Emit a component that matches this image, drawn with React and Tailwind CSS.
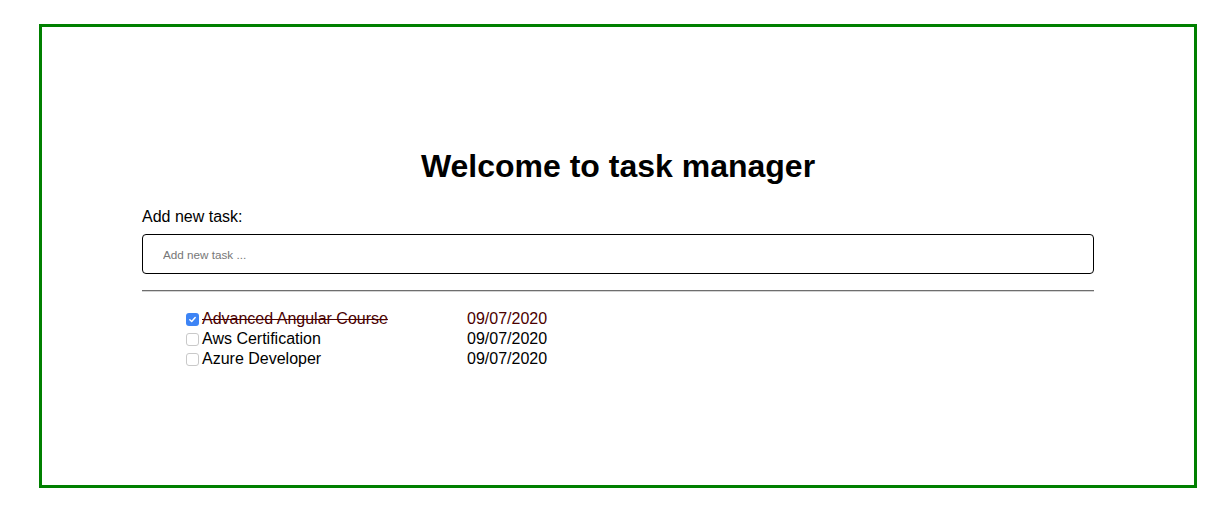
import React, { useState } from "react";

const initialTasks = [
  { id: 1, name: "Advanced Angular Course", date: "09/07/2020", done: true },
  { id: 2, name: "Aws Certification", date: "09/07/2020", done: false },
  { id: 3, name: "Azure Developer", date: "09/07/2020", done: false },
];

function Check({ checked, onClick }) {
  if (checked) {
    return (
      <span
        onClick={onClick}
        className="ml-[4px] mr-[3px] flex h-[13px] w-[13px] items-center justify-center rounded-[3px] bg-[#3d84f5]"
      >
        <svg width="9" height="9" viewBox="0 0 10 10" fill="none">
          <path
            d="M2 5.3 L4.1 7.3 L8 2.8"
            stroke="white"
            strokeWidth="1.6"
            strokeLinecap="round"
            strokeLinejoin="round"
          />
        </svg>
      </span>
    );
  }
  return (
    <span
      onClick={onClick}
      className="ml-[4px] mr-[3px] block h-[13px] w-[13px] rounded-[3px] border border-[#c9c9c9] bg-white"
    ></span>
  );
}

export default function App() {
  const [tasks, setTasks] = useState(initialTasks);

  const toggle = (id) => {
    setTasks(tasks.map((t) => (t.id === id ? { ...t, done: !t.done } : t)));
  };

  return (
    <div className="bg-white pt-[24px] pl-[39px] pr-[20px] font-['Liberation_Sans',Arial,sans-serif] text-black">
      <div className="h-[464px] border-[3px] border-[#008000] px-[100px] pt-[121px]">
        <h1 className="text-center text-[32px] font-bold leading-[37px]">
          Welcome to task manager
        </h1>

        <div className="mt-[23px] text-[16px] leading-[18px]">Add new task:</div>
        <input
          className="mt-[8px] block h-[40px] w-full rounded-[4px] border border-black pl-[20px] text-[11.7px] outline-none placeholder:text-[#777]"
          placeholder="Add new task ..."
        />

        <div className="mt-[16px] border-t border-b border-t-[#6e6e6e] border-b-[#d4d4d4]"></div>

        {/* task list */}
        <ul className="mt-[17px] pl-[40px]">
          {tasks.map((task) => (
            <li
              key={task.id}
              className={`flex h-5 items-center text-[16px] ${task.done ? "text-[#4a0000]" : "text-black"}`}
            >
              <Check checked={task.done} onClick={() => toggle(task.id)} />
              <span className={`w-[265px] ${task.done ? "line-through" : ""}`}>
                {task.name}
              </span>
              <span>{task.date}</span>
            </li>
          ))}
        </ul>
      </div>
    </div>
  );
}
